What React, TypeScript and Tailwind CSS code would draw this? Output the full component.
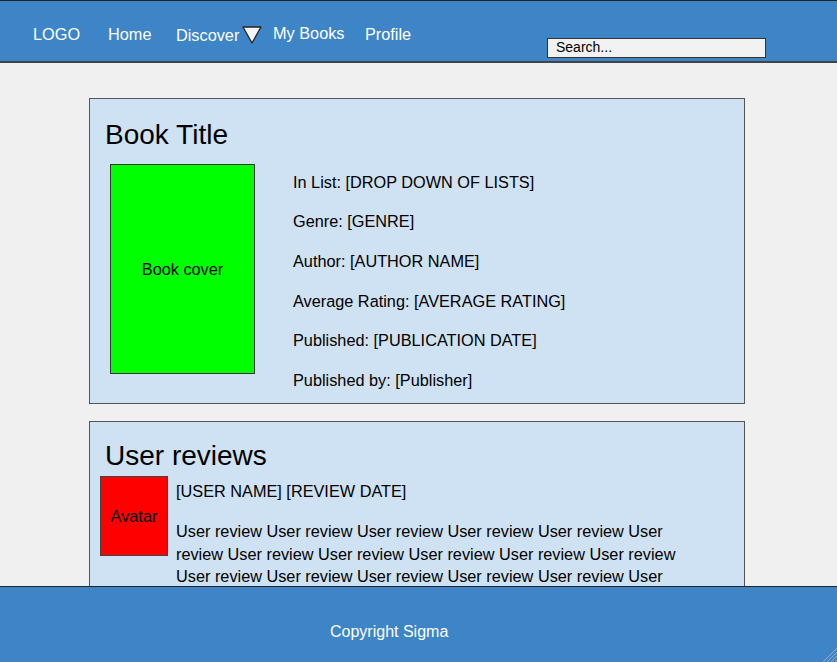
import React from "react";

const infoRows = [
  "In List: [DROP DOWN OF LISTS]",
  "Genre: [GENRE]",
  "Author: [AUTHOR NAME]",
  "Average Rating: [AVERAGE RATING]",
  "Published: [PUBLICATION DATE]",
  "Published by: [Publisher]",
];

const reviewText = Array(18).fill("User review").join(" ");

const App = () => {
  return (
    <div className="min-h-screen bg-[#f0f0f0] text-black font-['Liberation_Sans',Arial,sans-serif]">
      {/* Header */}
      <header className="h-[63px] bg-[#3d85c6] border-t border-t-[#222] border-b-2 border-b-[#444] flex text-white text-[16.3px] leading-[18px]">
        <nav className="w-[547px] shrink-0 flex items-start pt-[24px] pl-[33px]">
          <span className="w-[75px]">LOGO</span>
          <span className="w-[68px]">Home</span>
          <span className="w-[66px] pt-[1px]">Discover</span>
          <span className="w-[31px] pt-[1px]">
            <svg width="20" height="19" viewBox="0 0 20 19">
              <polygon points="1,1 19,1 10,17" fill="#f4f4f4" stroke="#222" strokeWidth="1.3" strokeLinejoin="round" />
            </svg>
          </span>
          <span className="w-[92px] -mt-[1px]">My Books</span>
          <span>Profile</span>
        </nav>
        <div className="pt-[37px]">
          <div className="w-[219px] h-[20px] bg-[#f2f2f2] border border-[#333] pl-[8px] text-[14px] leading-[16px] text-black">
            Search...
          </div>
        </div>
      </header>

      {/* Content */}
      <main className="pt-[35px] pb-[120px] flex flex-col items-start pl-[89px] gap-[17px] text-[16.3px]">
        <section className="w-[656px] h-[306px] bg-[#cfe2f3] border border-[#555]">
          <h1 className="text-[28px] leading-[30px] pl-[15px] pt-[21px]">Book Title</h1>
          <div className="flex pl-[20px] pt-[14px]">
            <div className="w-[145px] h-[210px] bg-[#00ff00] border border-[#333] flex items-center justify-center">
              Book cover
            </div>
            <div className="ml-[38px] -mt-[2px] flex flex-col">
              {infoRows.map((row) => (
                <div key={row} className="h-[39.6px] flex items-center leading-[18px]">
                  {row}
                </div>
              ))}
            </div>
          </div>
        </section>

        <section className="w-[656px] bg-[#cfe2f3] border border-[#555] pb-[20px]">
          <h2 className="text-[28px] leading-[30px] pl-[15px] pt-[19px]">User reviews</h2>
          <div className="flex pl-[10px] pt-[5px]">
            <div className="w-[68px] h-[80px] bg-[#ff0000] border border-[#444] flex items-center justify-center shrink-0">
              Avatar
            </div>
            <div className="ml-[8px] w-[520px]">
              <p className="leading-[18px] pt-[6px]">[USER NAME] [REVIEW DATE]</p>
              <p className="leading-[22.5px] pt-[20px]">{reviewText}</p>
            </div>
          </div>
        </section>
      </main>

      {/* Footer */}
      <footer className="fixed left-0 right-0 bottom-0 h-[76px] bg-[#3d85c6] border-t border-t-[#222] text-white text-[16px] leading-[18px]">
        <p className="pl-[330px] pt-[36px]">Copyright Sigma</p>
        <svg width="16" height="16" viewBox="0 0 16 16" className="absolute right-0 bottom-0">
          <line x1="16" y1="2" x2="2" y2="16" stroke="#9aa9b8" strokeWidth="1" />
          <line x1="16" y1="6" x2="6" y2="16" stroke="#9aa9b8" strokeWidth="1" />
          <line x1="16" y1="10" x2="10" y2="16" stroke="#9aa9b8" strokeWidth="1" />
          <line x1="16" y1="14" x2="14" y2="16" stroke="#9aa9b8" strokeWidth="1" />
        </svg>
      </footer>
    </div>
  );
};

export default App;
